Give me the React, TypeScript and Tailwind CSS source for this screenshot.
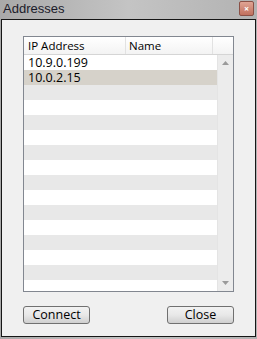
import React from "react";

const rows = ["10.9.0.199", "10.0.2.15", "", "", "", "", "", "", "", "", "", "", "", "", "", ""];

function rowColor(i: number) {
  if (i === 1) return "bg-[#d6d2ca]";
  if (i >= 2 && i % 2 === 0) return "bg-[#e8e8e8]";
  return "bg-white";
}

export default function App() {
  return (
    <div
      className="w-[257px] h-[339px] flex flex-col bg-gradient-to-r from-[#a9a9a9] via-[#c4c4c4] to-[#b2b2b2] text-[12px] text-black"
      style={{ fontFamily: '"Open Sans", "Liberation Sans", sans-serif' }}
    >
      <div className="h-[19px] flex items-center justify-between pl-[3px] pr-[3px]">
        <span
          className="text-[13px] text-[#1b1b2a] leading-none -mt-[2px]"
          style={{ fontFamily: '"Liberation Sans", sans-serif' }}
        >
          Addresses
        </span>
        <div className="w-[15px] h-[15px] -mt-[2px] rounded-[2px] border border-[#8a5046] bg-gradient-to-b from-[#e0a494] to-[#c0705e] flex items-center justify-center text-white text-[9px] font-bold leading-none">
          ×
        </div>
      </div>
      <div className="flex-1 mx-[1px] mb-[2px] border border-[#161616] bg-[#f0f0f0] flex flex-col pl-[21px] pr-[21px] pt-[16px]">
        <div className="h-[256px] border border-[#828790] bg-white flex flex-col">
          <div className="h-[18px] flex border-b border-[#d5d5d5] bg-gradient-to-b from-white to-[#f3f3f3]">
            <div className="w-[102px] pl-[4px] border-r border-[#e2e2e2] leading-[17px] text-[11.5px]">IP Address</div>
            <div className="w-[87px] pl-[3px] border-r border-[#e2e2e2] leading-[17px] text-[11.5px]">Name</div>
            <div className="flex-1" />
          </div>
          <div className="flex flex-1 min-h-0">
            <div className="flex-1 flex flex-col overflow-hidden">
              {rows.map((r, i) => (
                <div key={i} className={`h-[15px] shrink-0 pl-[4px] leading-[15px] text-[12.5px] ${rowColor(i)}`}>
                  {r}
                </div>
              ))}
            </div>
            <div className="w-[16px] bg-[#ececec] border-l border-[#e4e4e4] flex flex-col items-center justify-between py-[6px]">
              <svg width="7" height="4" viewBox="0 0 7 4">
                <path d="M0 4 L3.5 0 L7 4 Z" fill="#9a9a9a" />
              </svg>
              <svg width="7" height="4" viewBox="0 0 7 4">
                <path d="M0 0 L3.5 4 L7 0 Z" fill="#9a9a9a" />
              </svg>
            </div>
          </div>
        </div>
        <div className="flex justify-between mt-[14px]">
          <button className="w-[67px] h-[18px] rounded-[3px] border border-[#707070] bg-gradient-to-b from-[#f2f2f2] via-[#e8e8e8] to-[#cfcfcf] leading-none text-[12.5px]">
            Connect
          </button>
          <button className="w-[67px] h-[18px] rounded-[3px] border border-[#707070] bg-gradient-to-b from-[#f2f2f2] via-[#e8e8e8] to-[#cfcfcf] leading-none text-[12.5px]">
            Close
          </button>
        </div>
      </div>
    </div>
  );
}
